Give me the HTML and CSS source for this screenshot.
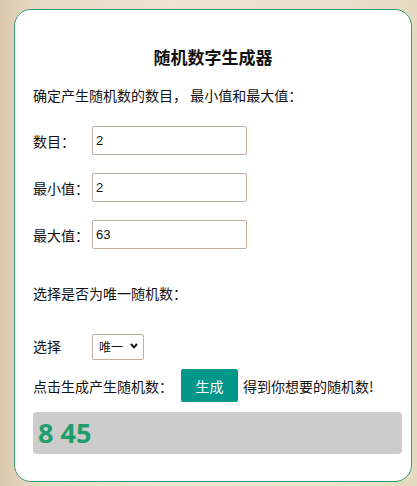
FILE: index.html
```html
<!DOCTYPE html>
<html lang="zh-CN">
<head>
<meta charset="utf-8">
<title>随机数字生成器</title>
<link rel="stylesheet" href="styles.css">
</head>
<body>
<div class="card">
  <h2 class="title">随机数字生成器</h2>
  <p class="intro">确定产生随机数的数目， 最小值和最大值：</p>
  <div class="row first">
    <label class="label">数目：</label>
    <input class="field" type="text" value="2">
  </div>
  <div class="row">
    <label class="label">最小值：</label>
    <input class="field" type="text" value="2">
  </div>
  <div class="row">
    <label class="label">最大值：</label>
    <input class="field" type="text" value="63">
  </div>
  <p class="question">选择是否为唯一随机数：</p>
  <div class="row select-row">
    <label class="label">选择</label>
    <div class="select-wrap">
      <select class="select">
        <option>唯一</option>
        <option>不唯一</option>
      </select>
      <svg class="chev" width="8" height="6" viewBox="0 0 8 6"><path d="M1 1 L4 4.3 L7 1" fill="none" stroke="#111" stroke-width="2"/></svg>
    </div>
  </div>
  <div class="gen-row">
    <span>点击生成产生随机数：</span>
    <button class="btn">生成</button>
    <span>得到你想要的随机数!</span>
  </div>
  <div class="result">8 45</div>
</div>
</body>
</html>
```
FILE: styles.css
```css
html, body {
  margin: 0;
  padding: 0;
}
body {
  width: 417px;
  height: 486px;
  overflow: hidden;
  background: linear-gradient(90deg, #d9c6a9 0%, #e6d9c2 7%, #ede3d1 40%, #ebe0cc 80%, #e6d9c1 100%);
  font-family: "Noto Sans CJK SC", "Noto Sans", sans-serif;
  color: #111;
  padding-top: 9px;
  box-sizing: border-box;
}
.card {
  margin-left: 14px;
  width: 398px;
  height: 473px;
  box-sizing: border-box;
  background: #fff;
  border: 1px solid #3a9c72;
  border-radius: 17px;
  padding: 0 9px 26px 18px;
  display: flex;
  flex-direction: column;
}
.title {
  margin: 35px 0 0 -9px;
  font-size: 17px;
  line-height: 24px;
  font-weight: 700;
  text-align: center;
}
.intro {
  margin: 16px 0 0;
  font-size: 14px;
  line-height: 20px;
  white-space: pre;
}
.row {
  display: flex;
  align-items: center;
  margin-top: 18px;
  height: 29px;
}
.row.first {
  margin-top: 21px;
}
.label {
  width: 59px;
  font-size: 14px;
  line-height: 20px;
  flex: none;
}
.field {
  width: 155px;
  height: 29px;
  box-sizing: border-box;
  border: 1px solid #c3ada1;
  border-radius: 2px;
  padding: 0 3px;
  font-family: "Liberation Sans", Arial, sans-serif;
  font-size: 13px;
  color: #111;
  outline: none;
}
.question {
  margin: 34px 0 0;
  font-size: 14px;
  line-height: 20px;
}
.row.select-row {
  margin-top: 30px;
  height: 26px;
}
.select-wrap {
  position: relative;
  width: 52px;
  height: 26px;
}
.select {
  appearance: none;
  -webkit-appearance: none;
  width: 52px;
  height: 26px;
  box-sizing: border-box;
  border: 1px solid #c3ada1;
  border-radius: 2px;
  background: #fff;
  padding: 0 0 0 6px;
  font-family: "Noto Sans CJK SC", sans-serif;
  font-size: 12px;
  color: #111;
  outline: none;
}
.chev {
  position: absolute;
  right: 6px;
  top: 10px;
  pointer-events: none;
}
.gen-row {
  display: flex;
  align-items: center;
  margin-top: 10px;
  height: 33px;
  font-size: 14px;
  line-height: 20px;
  white-space: nowrap;
}
.btn {
  margin: 0 5px 0 8px;
  width: 57px;
  height: 33px;
  border: none;
  border-radius: 2px;
  background: #009688;
  color: #fff;
  font-family: "Noto Sans CJK SC", sans-serif;
  font-size: 14px;
  padding: 0;
}
.result {
  margin-top: 10px;
  height: 42px;
  background: #cccccc;
  border-radius: 4px;
  padding-left: 5px;
  font-family: "Open Sans", "Noto Sans", sans-serif;
  font-weight: 700;
  font-size: 27px;
  line-height: 42px;
  color: #1f9e6c;
}
```
